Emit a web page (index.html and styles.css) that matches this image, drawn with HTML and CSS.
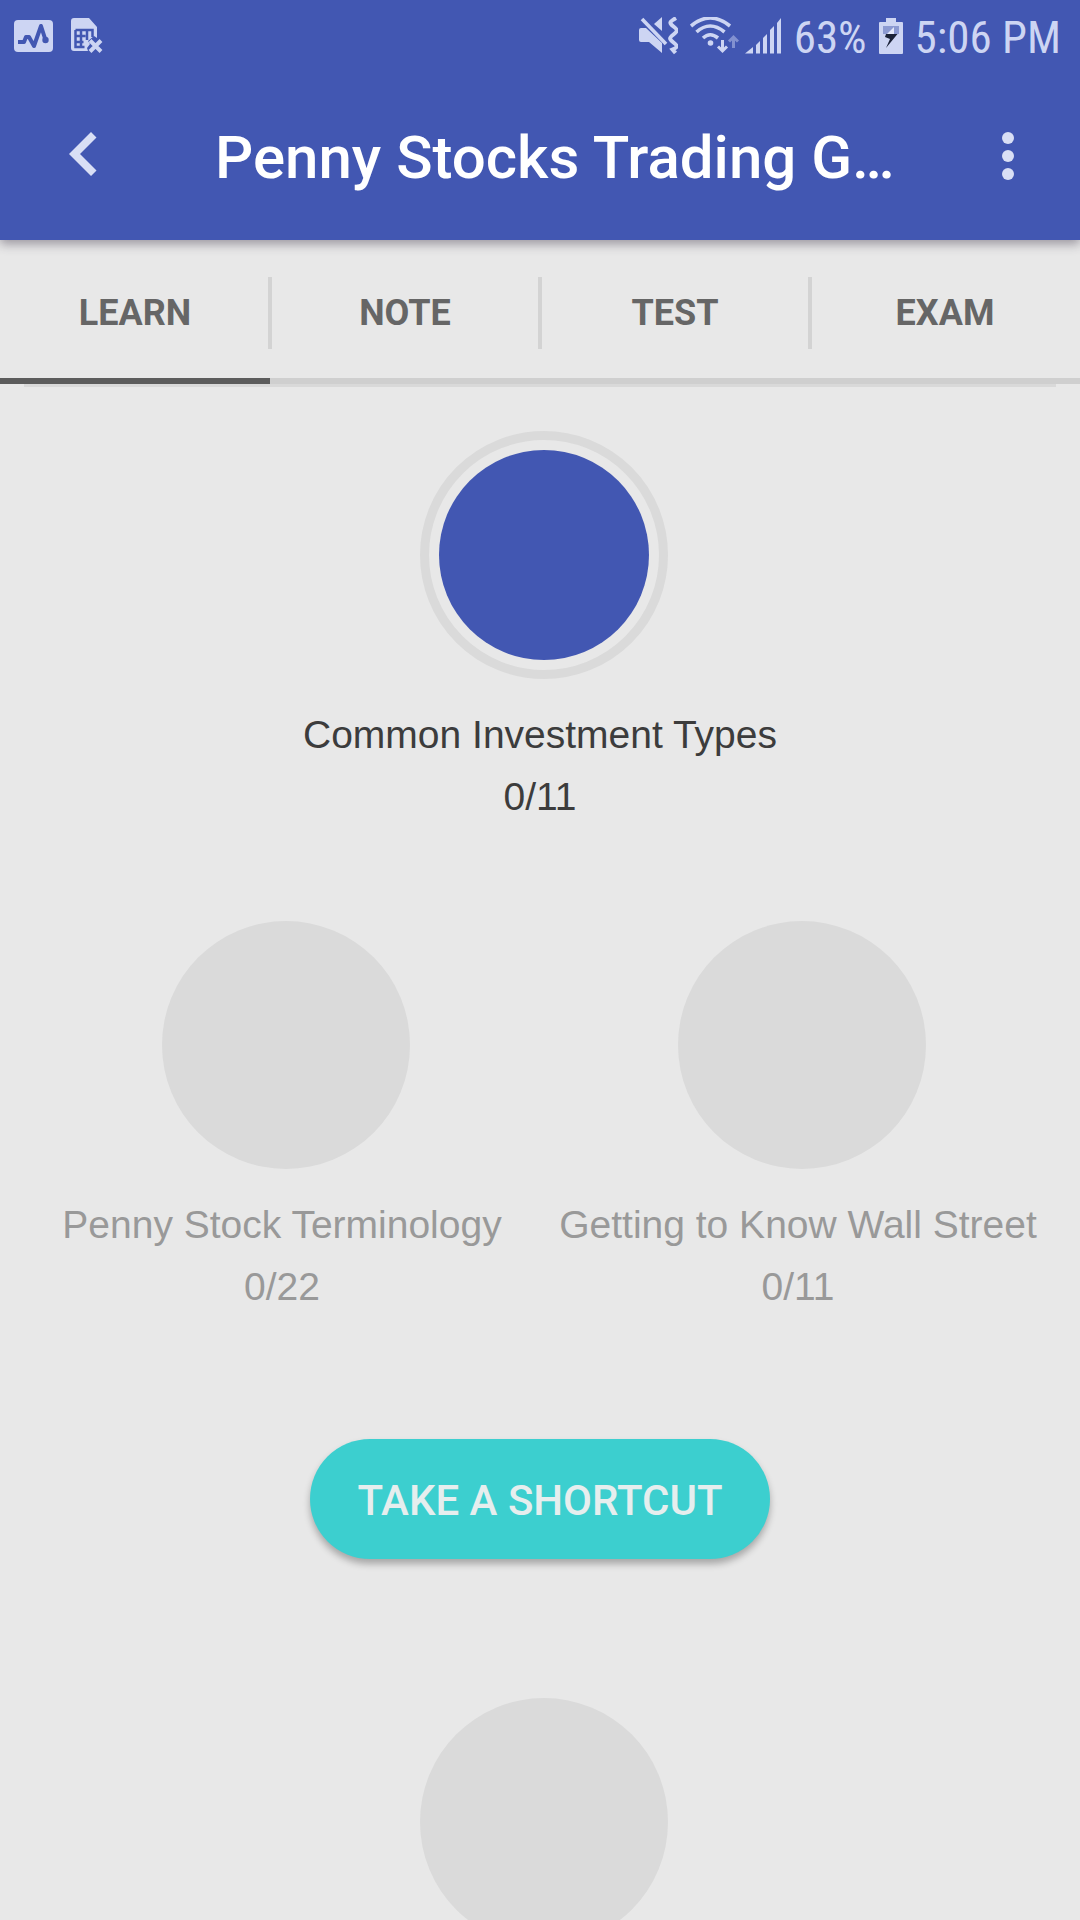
FILE: index.html
```html
<!DOCTYPE html>
<html lang="en">
<head>
<meta charset="utf-8">
<meta name="viewport" content="width=device-width, initial-scale=1">
<title>Penny Stocks Trading Guide</title>
<link rel="stylesheet" href="styles.css">
</head>
<body>
<div class="app">
  <header class="top">
    <div class="status">
      <div class="status-left">
        <svg width="39" height="36" viewBox="0 0 39 36" aria-hidden="true">
          <rect x="0" y="2" width="39" height="32" rx="4" fill="#cdd5f3"/>
          <path d="M4 24h6l2-5h3l5 9 7-20 4.500 14" fill="none" stroke="#4257b2" stroke-width="4" stroke-linejoin="round"/>
          <circle cx="31.500" cy="22" r="3.200" fill="#4257b2"/>
        </svg>
        <svg width="32" height="36" viewBox="0 0 32 36" aria-hidden="true">
          <path d="M3 0h15l8 9v11l-3-2-6 5 2 3-3 4 1 3H3a3 3 0 0 1-3-3V3a3 3 0 0 1 3-3z" fill="#cdd5f3"/>
          <path d="M4.500 12h17v7M4.500 12v17h9M4.500 18h10M4.500 24h8M10 12v17M16 12v10" fill="none" stroke="#4257b2" stroke-width="2.500"/>
          <path d="M19 22.500l11 11M30 22.500l-11 11" stroke="#cdd5f3" stroke-width="4"/>
        </svg>
      </div>
      <div class="status-right">
        <svg width="39" height="38" viewBox="0 0 39 38" aria-hidden="true">
          <path d="M2 11h5l16 15v10L10 25H2a2 2 0 0 1-2-2V13a2 2 0 0 1 2-2z" fill="#cdd5f3"/>
          <path d="M23 0v14l-8-7z" fill="#cdd5f3"/>
          <path d="M3 2l24 25" stroke="#cdd5f3" stroke-width="3.600"/>
          <path d="M37 1c-7 4-7 5-2.500 8.500s4.500 4.500 0 8-4.500 4.500 0 8 4.500 4.500-1 7l3 3.500" fill="none" stroke="#cdd5f3" stroke-width="4"/>
        </svg>
        <svg class="wifi" width="49" height="38" viewBox="0 0 49 38" aria-hidden="true">
          <g fill="none" stroke="#cdd5f3" stroke-width="3.600">
            <path d="M1 9Q20-7 40 9M6.500 15Q20 3 34.500 15M13 21Q20 14.500 28 21"/>
            <path d="M32.500 23v11M28 29.500l4.500 4.500 4.500-4.500" stroke-width="3"/>
          </g>
          <circle cx="20.500" cy="26" r="2.800" fill="#cdd5f3"/>
          <path d="M43.500 31V20M39 24.500l4.500-4.500 4.500 4.500" fill="none" stroke="#8291d0" stroke-width="3"/>
        </svg>
        <svg width="37" height="36" viewBox="0 0 37 36" aria-hidden="true">
          <path d="M0 35.500L8 29v6.500zM11 27l4-4v12.500h-4zM18 20l4-4v19.500h-4zM25 12l4-4v27.500h-4zM32 5l4-5v35.500h-4z" fill="#cdd5f3"/>
        </svg>
        <span class="status-text">63%</span>
        <svg width="24" height="36" viewBox="0 0 24 36" aria-hidden="true">
          <path d="M7 0h10v4h6q1 0 1 1v30q0 1-1 1H1q-1 0-1-1V5q0-1 1-1h6z" fill="#cdd5f3"/>
          <path d="M4 8h16v8H4z" fill="#8c9ad2"/>
          <path d="M15 9L7 17h8z" fill="#e3e8fa"/>
          <path d="M7 16h11.500L7 30l4-9-5-2z" fill="#1b2238"/>
        </svg>
        <span class="status-text">5:06 PM</span>
      </div>
    </div>
    <div class="bar">
      <button class="icon-button" type="button" aria-label="Back">
        <svg width="72" height="72" viewBox="0 0 72 72" aria-hidden="true">
          <path d="M43 12l5.500 5.500L32 34l16.500 16.500L43 56 21 34z" fill="#d9dff5"/>
        </svg>
      </button>
      <h1 class="title">Penny Stocks Trading G…</h1>
      <button class="icon-button" type="button" aria-label="More options">
        <svg width="72" height="72" viewBox="0 0 24 24" aria-hidden="true" fill="#d9dff5">
          <circle cx="12" cy="6" r="2"/><circle cx="12" cy="12" r="2"/><circle cx="12" cy="18" r="2"/>
        </svg>
      </button>
    </div>
  </header>
  <nav class="tabs">
    <button class="tab tab-active" type="button" aria-current="page">LEARN</button>
    <button class="tab" type="button">NOTE</button>
    <button class="tab" type="button">TEST</button>
    <button class="tab" type="button">EXAM</button>
  </nav>
  <main class="course">
    <div class="row">
      <button class="lesson lesson-open" type="button">
        <span class="disc"></span>
        <span class="label">Common Investment Types</span>
        <span class="label">0/11</span>
      </button>
    </div>
    <div class="row">
      <button class="lesson" type="button">
        <span class="disc"></span>
        <span class="label">Penny Stock Terminology</span>
        <span class="label">0/22</span>
      </button>
      <button class="lesson" type="button">
        <span class="disc"></span>
        <span class="label">Getting to Know Wall Street</span>
        <span class="label">0/11</span>
      </button>
    </div>
    <button class="shortcut" type="button">TAKE A SHORTCUT</button>
    <div class="row">
      <button class="lesson" type="button" aria-label="Locked lesson">
        <span class="disc"></span>
      </button>
    </div>
  </main>
</div>
</body>
</html>
```
FILE: styles.css
```css
* {
  box-sizing: border-box;
}

body {
  margin: 0;
  background: #e8e8e8;
  font-family: Roboto, "Liberation Sans", sans-serif;
}

button {
  margin: 0;
  padding: 0;
  border: 0;
  background: none;
  font: inherit;
  color: inherit;
  cursor: pointer;
}

svg {
  display: block;
  flex: none;
}

.app {
  display: flex;
  flex-direction: column;
  height: 100vh;
}

/* Status bar and app bar */
.top {
  position: relative;
  flex: none;
  background: #4257b2;
  box-shadow: 0 4px 10px rgba(60, 50, 70, 0.45);
}

.status {
  display: flex;
  justify-content: space-between;
  align-items: center;
  height: 72px;
  padding: 0 19px 0 14px;
}

.status-left,
.status-right {
  display: flex;
  align-items: center;
}

.status-left {
  gap: 18px;
}

.status-right {
  gap: 12px;
}

.wifi {
  margin-right: -6px;
}

.status-text {
  padding-top: 4px;
  font-family: "Roboto Condensed", "Liberation Sans Narrow", Roboto, sans-serif;
  font-size: 45px;
  line-height: 68px;
  color: #cdd5f3;
  white-space: nowrap;
}

.bar {
  display: flex;
  align-items: center;
  height: 168px;
  padding: 0 36px 0 48px;
}

.icon-button {
  flex: none;
}

.title {
  flex: 1;
  min-width: 0;
  margin: 0;
  padding: 4px 0 0 95px;
  font-size: 60px;
  line-height: 72px;
  font-weight: 500;
  color: #fff;
  white-space: nowrap;
}

/* Tabs */
.tabs {
  display: grid;
  grid-template-columns: repeat(4, 1fr);
  flex: none;
}

.tab {
  display: flex;
  justify-content: space-between;
  align-items: center;
  height: 144px;
  padding-top: 8px;
  border-bottom: 6px solid #cfcfcf;
  font-size: 36px;
  line-height: 72px;
  font-weight: 700;
  color: #666;
}

.tab::before,
.tab::after {
  content: "";
  width: 2px;
  height: 72px;
}

.tab:not(:last-child)::after,
.tab:not(:first-child)::before {
  background: #d3d3d3;
}

.tab-active {
  border-bottom-color: #5c5c5c;
}

/* Course map */
.course {
  flex: 1;
  min-height: 0;
  overflow: hidden;
  margin: 0 24px;
  border-top: 3px solid #d9d9d9;
  padding-top: 44px;
  display: flex;
  flex-direction: column;
  align-items: center;
}

.row {
  flex: none;
  display: flex;
  justify-content: center;
  width: 100%;
  margin-bottom: 93px;
}

.lesson {
  width: 50%;
  display: flex;
  flex-direction: column;
  align-items: center;
  color: #999;
}

.disc {
  width: 248px;
  height: 248px;
  margin: 0 0 25px 8px;
  border-radius: 50%;
  background: #dadada;
}

.label {
  font-family: "Liberation Sans", sans-serif;
  font-size: 39px;
  line-height: 62px;
  white-space: nowrap;
}

.lesson-open {
  color: #3c3c3c;
}

.lesson-open .disc {
  border: 9px solid #dadada;
  padding: 10px;
  background: #4257b2 content-box;
}

.shortcut {
  flex: none;
  height: 120px;
  margin: 28px 0 139px;
  padding: 4px 47px 0;
  border-radius: 60px;
  background: #3ccfcf;
  box-shadow: 0 5px 7px rgba(0, 0, 0, 0.28);
  font-size: 42px;
  font-weight: 500;
  line-height: 72px;
  color: #e6eeee;
  white-space: nowrap;
}
```
